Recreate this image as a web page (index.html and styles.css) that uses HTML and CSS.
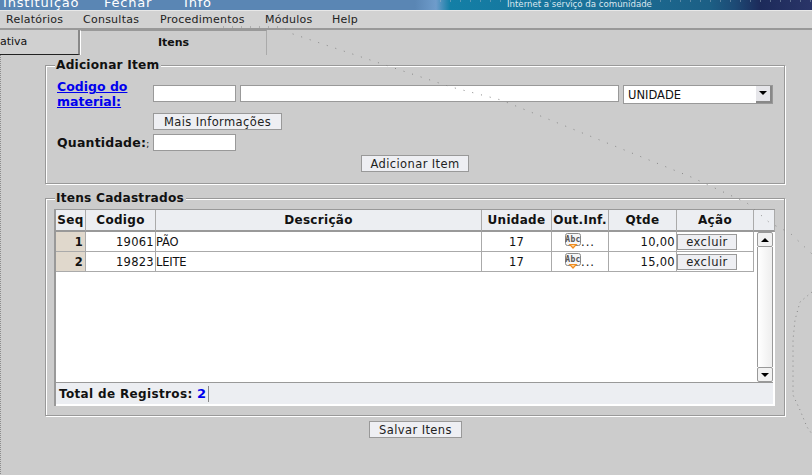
FILE: index.html
```html
<!DOCTYPE html>
<html lang="en">
<head>
    <meta charset="UTF-8">
    <title>Itens</title>
    <link rel="stylesheet" href="styles.css">
</head>
<body>
    <div class="banner">
        <span class="banner-link banner-inst">Instituição</span>
        <span class="banner-link banner-fechar">Fechar</span>
        <span class="banner-link banner-info">Info</span>
        <span class="banner-slogan">Internet a serviço da comunidade</span>
    </div>

    <nav class="menu">
        <span>Relatórios</span>
        <span>Consultas</span>
        <span>Procedimentos</span>
        <span>Módulos</span>
        <span>Help</span>
    </nav>

    <div class="tabs">
        <div class="tab tab-off">ativa</div>
        <div class="tab tab-on">Itens</div>
    </div>

    <fieldset class="group group-add">
        <legend>Adicionar Item</legend>
        <div class="form-grid">
            <a class="code-link" href="#">Codigo do material:</a>
            <div class="code-fields">
                <input class="field field-code" type="text">
                <input class="field field-desc" type="text">
                <div class="combo">
                    <span class="combo-text">UNIDADE</span>
                    <span class="combo-arrow"></span>
                </div>
            </div>
            <span></span>
            <div><button class="btn btn-info" type="button">Mais Informações</button></div>
            <label class="qty-label">Quantidade:<span class="qty-mark">;</span></label>
            <div class="qty-field"><input class="field field-code" type="text"></div>
        </div>
        <div class="add-row">
            <button class="btn btn-add" type="button">Adicionar Item</button>
        </div>
    </fieldset>

    <fieldset class="group group-list">
        <legend>Itens Cadastrados</legend>
        <div class="panel">
            <table class="grid grid-head">
                <thead>
                    <tr>
                        <th class="c-seq">Seq</th>
                        <th class="c-code">Codigo</th>
                        <th class="c-desc">Descrição</th>
                        <th class="c-unit">Unidade</th>
                        <th class="c-out">Out.Inf.</th>
                        <th class="c-qty">Qtde</th>
                        <th class="c-act">Ação</th>
                        <th class="c-end"></th>
                    </tr>
                </thead>
            </table>
            <div class="panel-body">
                <table class="grid grid-rows">
                    <tbody>
                        <tr>
                            <td class="c-seq seq">1</td>
                            <td class="c-code num">19061</td>
                            <td class="c-desc desc">PÃO</td>
                            <td class="c-unit mid">17</td>
                            <td class="c-out mid">
                                <svg class="abc" width="16" height="17" viewBox="0 0 16 17">
                                    <rect x="0.5" y="0.5" width="15" height="12" rx="2" fill="#f6f6f6" stroke="#8a8a8a"/>
                                    <text x="8" y="9" font-size="8" font-weight="bold" text-anchor="middle" fill="#555" font-family="DejaVu Sans Mono, monospace">Abc</text>
                                    <path d="M3.500 11h9l-4.500 5z" fill="#f08c1e"/>
                                    <path d="M6 12h4l-2 2z" fill="#ffd9a0"/>
                                </svg><span class="dots">...</span>
                            </td>
                            <td class="c-qty num">10,00</td>
                            <td class="c-act"><button class="btn btn-del" type="button">excluir</button></td>
                        </tr>
                        <tr>
                            <td class="c-seq seq">2</td>
                            <td class="c-code num">19823</td>
                            <td class="c-desc desc">LEITE</td>
                            <td class="c-unit mid">17</td>
                            <td class="c-out mid">
                                <svg class="abc" width="16" height="17" viewBox="0 0 16 17">
                                    <rect x="0.5" y="0.5" width="15" height="12" rx="2" fill="#f6f6f6" stroke="#8a8a8a"/>
                                    <text x="8" y="9" font-size="8" font-weight="bold" text-anchor="middle" fill="#555" font-family="DejaVu Sans Mono, monospace">Abc</text>
                                    <path d="M3.500 11h9l-4.500 5z" fill="#f08c1e"/>
                                    <path d="M6 12h4l-2 2z" fill="#ffd9a0"/>
                                </svg><span class="dots">...</span>
                            </td>
                            <td class="c-qty num">15,00</td>
                            <td class="c-act"><button class="btn btn-del" type="button">excluir</button></td>
                        </tr>
                    </tbody>
                </table>
                <div class="scrollbar">
                    <div class="scroll-btn"><span class="arrow-up"></span></div>
                    <div class="scroll-track"></div>
                    <div class="scroll-btn"><span class="arrow-down"></span></div>
                </div>
            </div>
            <div class="panel-foot">
                <span class="total">Total de Registros: <b class="total-num">2</b></span>
            </div>
        </div>
    </fieldset>

    <div class="save-row">
        <button class="btn btn-save" type="button">Salvar Itens</button>
    </div>

    <!-- dotted trail that lies over the page -->
    <svg class="trail" width="812" height="475" viewBox="0 0 812 475">
        <path d="M440 1 L812 1" fill="none" stroke="#9fb4c4" stroke-width="1" stroke-dasharray="1 9"/>
        <path d="M223 27 L283 27 L290 33 L400 70 L451 87 L501 100 L691 177 L747 203 L770 223 L790 233 L812 254" fill="none" stroke="#888" stroke-width="1" stroke-dasharray="1 8"/>
        <path d="M812 292 L800 302 L795 320 L793 340 L793 395 L800 410 L807 427 L812 434" fill="none" stroke="#888" stroke-width="1" stroke-dasharray="1 4"/>
        <path d="M0.500 55 L0.500 475" fill="none" stroke="#8c8c8c" stroke-width="1" stroke-dasharray="1 1"/>
    </svg>
</body>
</html>
```

FILE: styles.css
```css
html, body {
    margin: 0;
    height: 475px;
    overflow: hidden;
}
body {
    position: relative;
    background-color: #cccccc;
    font-family: "DejaVu Sans", sans-serif;
    font-size: 11px;
    color: #111;
}

/* top strip */
.banner {
    height: 10px;
    border-bottom: 1px solid #e8e8e8;
    background: linear-gradient(90deg, #5a86b4 0, #5a86b4 415px, #6f9ccb 436px, #137fa6 450px, #1b6f97 600px, #1c5f85 710px, #1d4a75 735px, #1c2a5a 760px, #2a3568 812px);
    display: flex;
    align-items: flex-end;
    overflow: hidden;
    color: #fff;
}
.banner-link {
    font-size: 13px;
    line-height: 14px;
    letter-spacing: 0.8px;
    flex: none;
}
.banner-inst { margin-left: 3px; width: 101px; }
.banner-fechar { width: 80px; }
.banner-info { width: 323px; }
.banner-slogan {
    font-size: 8.600px;
    line-height: 11px;
    flex: none;
    color: #dbe8f0;
}

.menu {
    height: 17px;
    border-bottom: 2px solid #999;
    background-color: #d2d2d2;
    display: flex;
    align-items: center;
    font-size: 11px;
    letter-spacing: 0.25px;
    color: #222;
}
.menu span:nth-child(1) { margin-left: 6px; width: 77px; }
.menu span:nth-child(2) { width: 77px; }
.menu span:nth-child(3) { width: 105px; }
.menu span:nth-child(4) { width: 67px; }

.tabs {
    height: 25px;
    display: flex;
}
.tab {
    box-sizing: border-box;
    height: 25px;
    line-height: 24px;
}
.tab-off {
    width: 80px;
    border-right: 2px solid #888;
    border-bottom: 1px solid #222;
    background-color: #d0d0d0;
    overflow: hidden;
}
.tab-on {
    width: 187px;
    border-left: 1px solid #fff;
    border-right: 1px solid #aaa;
    border-top: 1px solid #999;
    text-align: center;
    font-weight: bold;
}

/* group boxes */
.group {
    box-sizing: border-box;
    width: 740px;
    margin: 0 0 0 45px;
    padding: 0;
    border: 1px solid #999;
    box-shadow: inset 1px 1px 0 #fff, 1px 1px 0 #fff;
    min-width: 0;
}
.group legend {
    margin-left: 9px;
    padding: 0 2px 0 1px;
    background-color: #ccc;
    font-size: 12.200px;
    line-height: 14px;
    font-weight: bold;
    letter-spacing: 0.2px;
}
.group-add {
    margin-top: 3px;
    height: 126px;
}
.group-list {
    margin-top: 7px;
    height: 225px;
}

.form-grid {
    display: grid;
    grid-template-columns: 96px 1fr;
    row-gap: 3px;
    padding: 7px 0 0 11px;
}
.code-link {
    font-size: 12.500px;
    line-height: 15px;
    font-weight: bold;
    color: #0000ee;
    height: 31px;
}
.code-fields {
    display: flex;
    align-items: flex-start;
    gap: 4px;
    padding-top: 6px;
}
.field {
    display: block;
    box-sizing: border-box;
    height: 17px;
    margin: 0;
    padding: 0;
    border: 1px solid #999;
    background-color: #fff;
}
.field-code { width: 83px; }
.field-desc { width: 379px; }
.combo {
    box-sizing: border-box;
    width: 150px;
    height: 19px;
    border: 1px solid #999;
    background-color: #fff;
    display: flex;
    align-items: center;
    justify-content: space-between;
    font-size: 11.500px;
}
.combo-text { margin-left: 4px; }
.combo-arrow {
    width: 14px;
    height: 15px;
    border-right: 2px solid #888;
    border-bottom: 2px solid #888;
    background-color: #e6e6ea;
    position: relative;
}
.combo-arrow::after {
    content: "";
    position: absolute;
    left: 3px;
    top: 5px;
    border: 4px solid transparent;
    border-top: 4px solid #000;
    border-bottom: 0;
}
.btn {
    box-sizing: border-box;
    margin: 0;
    padding: 0;
    border: 1px solid #999;
    background-color: #eeeff3;
    font-family: "DejaVu Sans", sans-serif;
    font-size: 11.500px;
    letter-spacing: 0.4px;
    color: #222;
    display: block;
}
.btn-info { width: 129px; height: 17px; }
.btn-add { width: 108px; height: 17px; margin-left: 315px; }
.btn-save { width: 93px; height: 17px; }
.btn-del { width: 60px; height: 16px; margin: 1px 0 1px; letter-spacing: 0.5px; }
.qty-label {
    font-size: 12.500px;
    font-weight: bold;
    line-height: 17px;
    letter-spacing: 0.2px;
    padding-top: 1px;
}
.qty-field { padding-top: 1px; }
.qty-mark { font-weight: normal; font-size: 9px; }
.add-row { padding-top: 2px; }

/* list panel */
.panel {
    box-sizing: border-box;
    width: 721px;
    height: 197px;
    margin: 4px 0 0 8px;
    border-left: 2px solid #999;
    border-top: 1px solid #999;
    background-color: #fff;
    display: flex;
    flex-direction: column;
}
.grid {
    border-collapse: separate;
    border-spacing: 0;
    table-layout: fixed;
    font-size: 11.500px;
}
.grid th, .grid td {
    box-sizing: border-box;
    padding: 0;
}
.grid-head {
    width: 719px;
    flex: none;
}
.grid-head th {
    height: 22px;
    background-color: #eceef2;
    border-right: 1px solid #aaa;
    border-bottom: 2px solid #999;
    font-size: 12px;
    letter-spacing: 0.3px;
}
.panel-body {
    flex: 1;
    display: flex;
    justify-content: space-between;
}
.grid-rows {
    width: 698px;
    align-self: flex-start;
}
.grid-rows td {
    height: 20px;
    border-right: 1px solid #aaa;
    border-bottom: 1px solid #aaa;
    letter-spacing: 0.3px;
}
.c-seq { width: 30px; }
.c-code { width: 70px; }
.c-desc { width: 326px; }
.c-unit { width: 70px; }
.c-out { width: 57px; }
.c-qty { width: 68px; }
.c-act { width: 77px; }
.c-end { width: 21px; }
.seq {
    background-color: #e0d8cc;
    text-align: right;
    font-weight: bold;
    padding-right: 2px !important;
}
.num { text-align: right; padding-right: 1px !important; }
.mid { text-align: center; }
.grid-rows .desc { letter-spacing: -0.2px; }
.abc { vertical-align: -4px; }
.dots { letter-spacing: 1px; }

.scrollbar {
    width: 16px;
    margin-right: 2px;
    display: flex;
    flex-direction: column;
}
.scroll-btn {
    box-sizing: border-box;
    height: 15px;
    border: 1px solid #999;
    border-radius: 2px;
    background-color: #f2f2f2;
    display: flex;
    align-items: center;
    justify-content: center;
    flex: none;
}
.scroll-track {
    flex: 1;
    border-left: 1px solid #999;
    border-right: 1px solid #999;
    background: linear-gradient(90deg, #fff, #eeeeee);
}
.arrow-up, .arrow-down {
    border: 4px solid transparent;
}
.arrow-up { border-bottom: 4px solid #000; border-top: 0; }
.arrow-down { border-top: 4px solid #000; border-bottom: 0; }

.panel-foot {
    flex: none;
    height: 21px;
    border-top: 1px solid #999;
    margin: 0 2px 2px 0;
    background-color: #eceef2;
    display: flex;
    align-items: center;
    padding-left: 3px;
}
.total {
    font-size: 12px;
    font-weight: bold;
    letter-spacing: 0.35px;
    padding-right: 1px;
    border-right: 1px solid #888;
    line-height: 15px;
}
.total-num { color: #0000ee; font-size: 13px; }

.save-row {
    padding: 5px 0 0 369px;
}

.trail {
    position: absolute;
    left: 0;
    top: 0;
    pointer-events: none;
}
```
